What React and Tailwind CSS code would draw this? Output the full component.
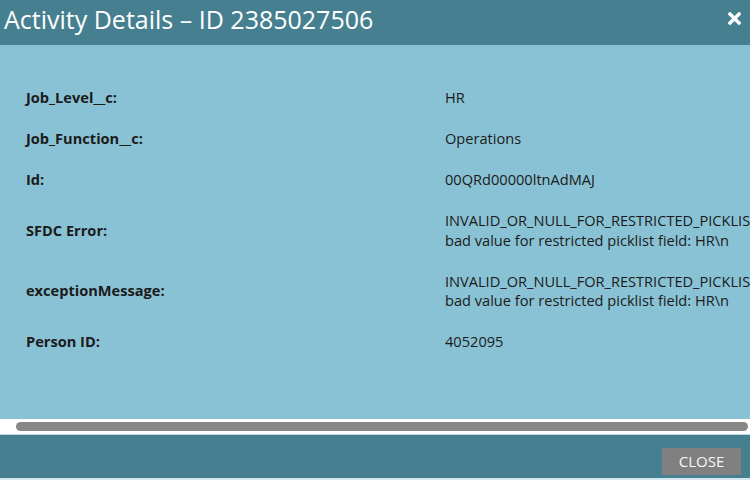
import React from "react";

const rows = [
  { label: "Job_Level__c:", value: ["HR"] },
  { label: "Job_Function__c:", value: ["Operations"] },
  { label: "Id:", value: ["00QRd00000ltnAdMAJ"] },
  {
    label: "SFDC Error:",
    value: [
      "INVALID_OR_NULL_FOR_RESTRICTED_PICKLIST:",
      "bad value for restricted picklist field: HR\\n",
    ],
  },
  {
    label: "exceptionMessage:",
    value: [
      "INVALID_OR_NULL_FOR_RESTRICTED_PICKLIST:",
      "bad value for restricted picklist field: HR\\n",
    ],
  },
  { label: "Person ID:", value: ["4052095"] },
];

export default function App() {
  return (
    <div
      className="w-[750px] h-[480px] flex flex-col overflow-hidden bg-[#89c2d4]"
      style={{ fontFamily: '"Open Sans", sans-serif' }}
    >
      <div className="h-[45px] shrink-0 bg-[#467f90] flex items-center justify-between pl-[4px] pr-[9px]">
        <div className="text-white text-[25px] leading-[30px] -mt-[7px]">
          Activity Details – ID 2385027506
        </div>
        <svg width="13" height="13" viewBox="0 0 13 13" className="-mt-[8px]">
          <path d="M2 2 L11 11 M11 2 L2 11" stroke="white" strokeWidth="3.4" strokeLinecap="square" />
        </svg>
      </div>
      <div className="flex-1 overflow-hidden pt-[32px] text-[#1b1b1b] text-[14.6px]">
        {rows.map((r) => (
          <div key={r.label} className="flex py-[10px] border-b border-transparent leading-[20px]">
            <div className="w-[445px] shrink-0 pl-[26px] font-bold flex items-center">
              {r.label}
            </div>
            <div className="whitespace-nowrap">
              {r.value.map((v, i) => (
                <div key={i} className={i > 0 ? "-mt-[0.5px]" : ""}>{v}</div>
              ))}
            </div>
          </div>
        ))}
      </div>
      <div className="h-[15px] shrink-0 bg-white flex items-center pl-[16px] pr-[2px]">
        <div className="h-[9px] flex-1 rounded-full bg-[#888888]"></div>
      </div>
      <div className="h-[1px] shrink-0 bg-[#b9dbe5]"></div>
      <div className="h-[43px] shrink-0 bg-[#467f90] flex items-end justify-end pr-[9px] pb-[3px]">
        <div className="w-[79px] h-[27px] bg-[#808080] text-[#f7f7f7] text-[15px] flex items-center justify-center">
          CLOSE
        </div>
      </div>
      <div className="h-[2px] shrink-0 bg-[#d3e8ee]"></div>
    </div>
  );
}
